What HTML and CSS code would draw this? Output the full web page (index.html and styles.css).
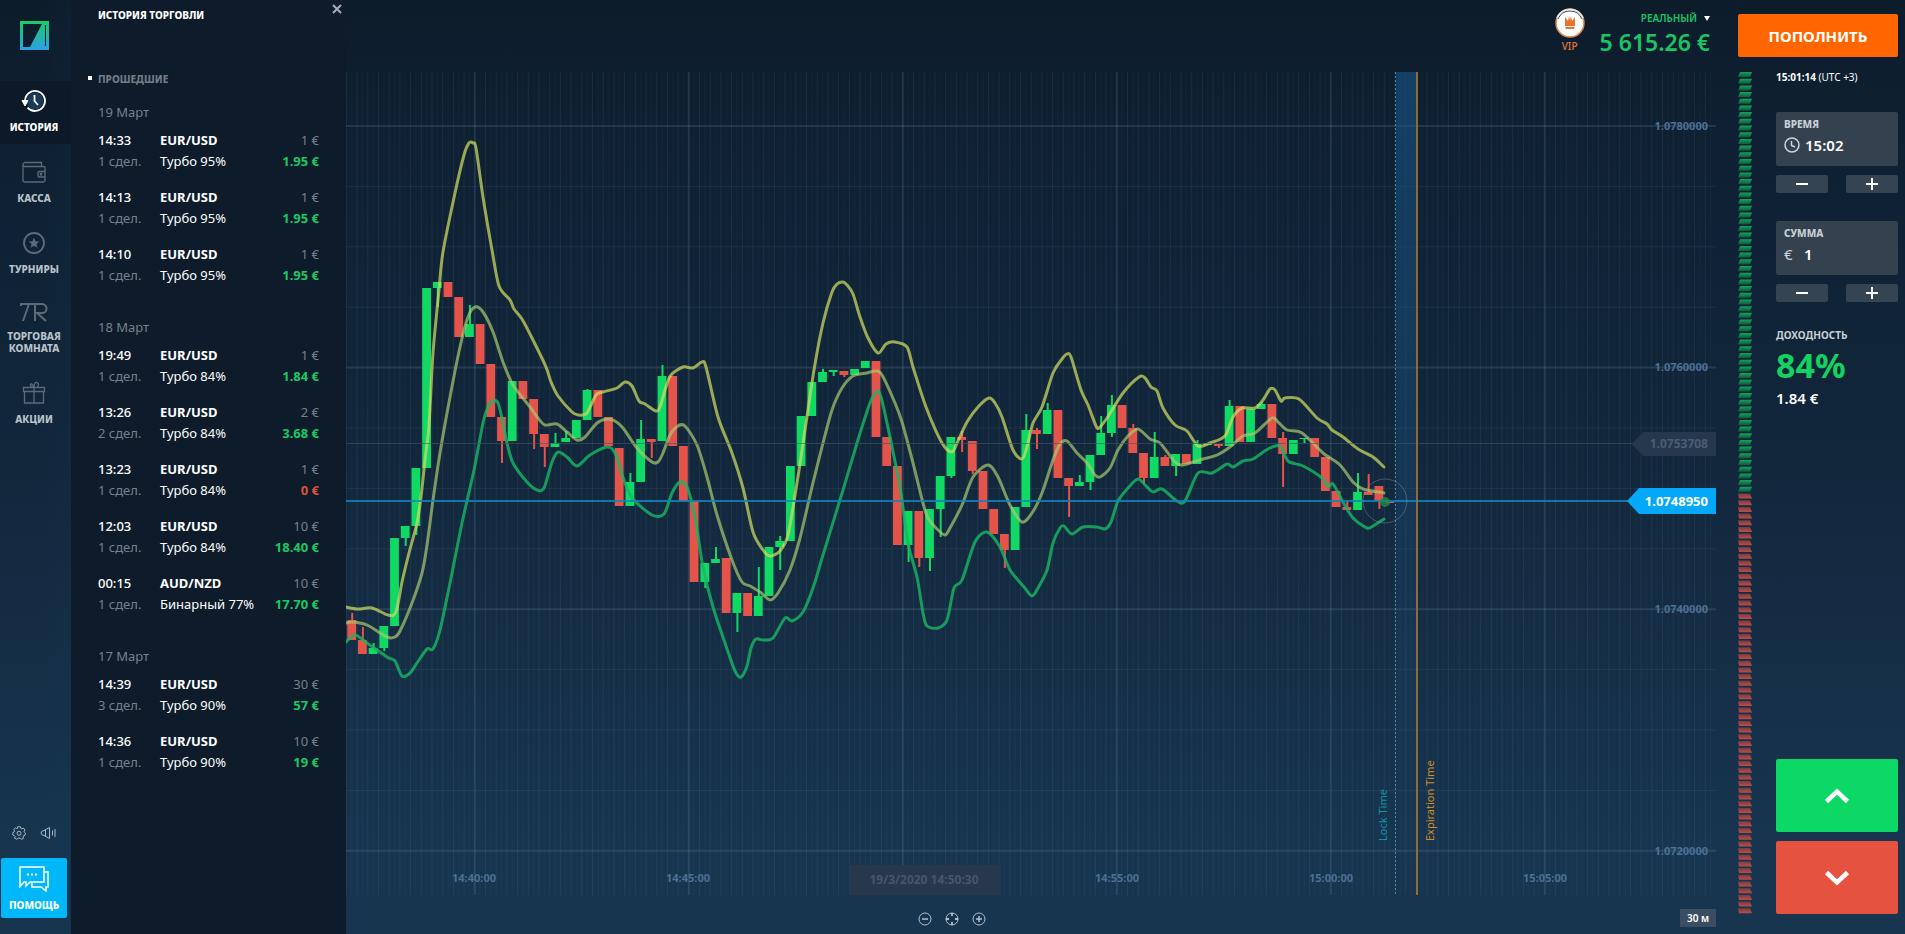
FILE: index.html
```html
<!DOCTYPE html>
<html lang="ru">
<head>
<meta charset="utf-8">
<meta name="viewport" content="width=device-width, initial-scale=1">
<title>История торговли</title>
<link rel="stylesheet" href="styles.css">
</head>
<body>
<div class="app">
  <nav class="sidebar">
    <a class="logo" href="#" aria-label="Главная">
      <svg width="30" height="30" viewBox="0 0 30 30">
        <defs><linearGradient id="lg" x1="0" y1="0" x2="0" y2="1"><stop offset="0" stop-color="#17cf62"/><stop offset="1" stop-color="#2f9fe6"/></linearGradient></defs>
        <path fill="url(#lg)" fill-rule="evenodd" d="M0 0H29V29H0ZM3 3V26H10L22 3ZM25 4V25H26V4Z"/>
      </svg>
    </a>
    <a class="nav-item active" href="#">
      <svg width="26" height="24" viewBox="0 0 26 24" fill="none" stroke="#fff" stroke-width="1.8"><circle cx="14" cy="12" r="8.500" fill="#183a58" stroke="none"/><path d="M4 12A10 10 0 1 1 6.500 18.600"/><path d="M13.500 6V12L17 16"/><path d="M1 11.500H7L4 17Z" fill="#fff" stroke-width="1"/></svg>
      <span>ИСТОРИЯ</span>
    </a>
    <a class="nav-item" href="#">
      <svg width="24" height="24" viewBox="0 0 24 24" fill="none" stroke="#5d6b79" stroke-width="1.3"><path d="M2 6Q1 6 1 4.500T2.500 2.500H19.500V6M1 4.500V20.500Q1 22 2.500 22H21.500Q23 22 23 20.500V7.500Q23 6.500 21.500 6.500H2M23 11.500H17Q16 11.500 16 12.500V16Q16 17 17 17H23"/><circle cx="19" cy="14.200" r=".8"/></svg>
      <span>КАССА</span>
    </a>
    <a class="nav-item" href="#">
      <svg width="24" height="24" viewBox="0 0 24 24"><circle cx="12" cy="12" r="10" fill="none" stroke="#5d6b79" stroke-width="1.800"/><path fill="#5d6b79" d="M12 6.500L13.500 10.300L17.300 10.500L14.400 13L15.400 16.800L12 14.700L8.600 16.800L9.600 13L6.700 10.500L10.500 10.300Z"/></svg>
      <span>ТУРНИРЫ</span>
    </a>
    <a class="nav-item room" href="#">
      <svg width="28" height="20" viewBox="0 2 28 20" fill="none" stroke="#5d6b79" stroke-width="2"><path d="M1 6V4H22A4 4 0 0 1 22 13H17L26 21M9 4L3 21M15 4V21"/></svg>
      <span>ТОРГОВАЯ<br>КОМНАТА</span>
    </a>
    <a class="nav-item" href="#">
      <svg width="24" height="24" viewBox="0 0 24 24" fill="none" stroke="#5d6b79" stroke-width="1.3"><path d="M1.500 6.500H22.500V10.500H1.500ZM2.500 10.500V22H21.500V10.500M12 6.500V22M12 6.500Q8 6 8.500 3.500Q10 1.500 12 6.500Q12 1 15 1.500Q18 3 15 6.500"/></svg>
      <span>АКЦИИ</span>
    </a>
    <div class="tools">
      <button type="button" aria-label="Настройки">
        <svg width="14" height="14" viewBox="0 0 14 14" fill="none" stroke="#a9b7c4"><path d="M5.700 .7H8.300L8.700 2.300L9.800 2.800L11.300 2L13 4L12.100 5.300L12.400 6.300L13.400 7L13 9.300L11.500 9.700L11 10.800L11.600 12.300L9.300 13.300L8.300 12.100H6.200L4.900 13.300L2.600 12.200L3.100 10.500L2.300 9.600L.8 9L.9 6.600L2.200 6L2.500 4.900L1.700 3.500L3.500 1.900L4.900 2.700L5.500 2.400Z"/><circle cx="7" cy="7.300" r="2"/></svg>
      </button>
      <button type="button" aria-label="Звук">
        <svg width="16" height="14" viewBox="0 0 16 14" fill="none" stroke="#a9b7c4"><path d="M4 9.500L9.500 12.500V1.500L4 4.500Q1 5 1 7T4 9.500ZM5.500 4V10M12.500 4.500V9.500M15 3V11"/></svg>
      </button>
    </div>
    <button class="help" type="button">
      <svg width="30" height="26" viewBox="0 0 30 26" fill="none" stroke="#fff" stroke-width="1.500"><path d="M1 1H25V16H11L7 20V16H5L1 20.500ZM25 6H29V21H27V25L22 21H13V16.500"/><path d="M8 8.500H10M12 8.500H14M16 8.500H18" stroke-width="2"/></svg>
      <span>ПОМОЩЬ</span>
    </button>
  </nav>

  <section class="history">
    <header class="history-head">
      <h1>ИСТОРИЯ ТОРГОВЛИ</h1>
      <button type="button" aria-label="Закрыть"><svg width="10" height="10" viewBox="0 0 10 10" stroke="#a6afb8" stroke-width="2"><path d="M1 1L9 9M9 1L1 9"/></svg></button>
    </header>
    <h2>ПРОШЕДШИЕ</h2>
    <h3>19 Март</h3>
    <ul class="trades">
      <li><b>14:33</b><strong>EUR/USD</strong><i>1 €</i><i>1 сдел.</i><span>Турбо 95%</span><em>1.95 €</em></li>
      <li><b>14:13</b><strong>EUR/USD</strong><i>1 €</i><i>1 сдел.</i><span>Турбо 95%</span><em>1.95 €</em></li>
      <li><b>14:10</b><strong>EUR/USD</strong><i>1 €</i><i>1 сдел.</i><span>Турбо 95%</span><em>1.95 €</em></li>
    </ul>
    <h3>18 Март</h3>
    <ul class="trades">
      <li><b>19:49</b><strong>EUR/USD</strong><i>1 €</i><i>1 сдел.</i><span>Турбо 84%</span><em>1.84 €</em></li>
      <li><b>13:26</b><strong>EUR/USD</strong><i>2 €</i><i>2 сдел.</i><span>Турбо 84%</span><em>3.68 €</em></li>
      <li><b>13:23</b><strong>EUR/USD</strong><i>1 €</i><i>1 сдел.</i><span>Турбо 84%</span><em class="loss">0 €</em></li>
      <li><b>12:03</b><strong>EUR/USD</strong><i>10 €</i><i>1 сдел.</i><span>Турбо 84%</span><em>18.40 €</em></li>
      <li><b>00:15</b><strong>AUD/NZD</strong><i>10 €</i><i>1 сдел.</i><span>Бинарный 77%</span><em>17.70 €</em></li>
    </ul>
    <h3>17 Март</h3>
    <ul class="trades">
      <li><b>14:39</b><strong>EUR/USD</strong><i>30 €</i><i>3 сдел.</i><span>Турбо 90%</span><em>57 €</em></li>
      <li><b>14:36</b><strong>EUR/USD</strong><i>10 €</i><i>1 сдел.</i><span>Турбо 90%</span><em>19 €</em></li>
    </ul>
  </section>

  <main class="market">
    <header class="account">
      <a class="vip" href="#">
        <svg width="30" height="30" viewBox="0 0 30 30"><circle cx="15" cy="15" r="14" fill="#fff" stroke="#d98a4a" stroke-width="1.500"/><path d="M3 11A13 13 0 0 1 27 11" fill="none" stroke="#33475a" stroke-width="1"/><path d="M2 10A14 14 0 0 1 28 10" fill="none" stroke="#e8edf2" stroke-width="1.500"/><path fill="#e8742c" d="M10 9L13 13L14 8L15 12L16 8L17 13L20 9V18H10ZM10.500 19H19.500V21H10.500Z"/></svg>
        <span>VIP</span>
      </a>
      <button class="balance" type="button"><span class="kind">РЕАЛЬНЫЙ <svg width="6" height="5" viewBox="0 0 6 5"><path d="M0 0H6L3 5Z" fill="#fff"/></svg></span><span class="sum">5 615.26 €</span></button>
    </header>
    <svg id="chart" class="chart" viewBox="346 72 1370 823" role="img" aria-label="График EUR/USD"></svg>
    <footer class="chart-bar">
      <span></span>
      <div class="zooms">
        <button type="button" aria-label="Уменьшить"><svg width="14" height="14" viewBox="0 0 14 14" fill="none" stroke="#b4c1cd"><circle cx="7" cy="7" r="6"/><path d="M4 7H10" stroke-width="1.500"/></svg></button>
        <button type="button" aria-label="Центрировать"><svg width="14" height="14" viewBox="0 0 14 14" fill="none" stroke="#b4c1cd"><circle cx="7" cy="7" r="6"/><path d="M7 1V4M7 10V13M1 7H4M10 7H13" stroke-width="1.800"/></svg></button>
        <button type="button" aria-label="Увеличить"><svg width="14" height="14" viewBox="0 0 14 14" fill="none" stroke="#b4c1cd"><circle cx="7" cy="7" r="6"/><path d="M4 7H10M7 4V10" stroke-width="1.500"/></svg></button>
      </div>
      <button class="period" type="button">30 м</button>
    </footer>
  </main>

  <aside class="deal">
    <button class="deposit" type="button">ПОПОЛНИТЬ</button>
    <div class="deal-body">
      <svg id="gauge" class="gauge" viewBox="0 0 14 842" preserveAspectRatio="none" aria-hidden="true"></svg>
      <form class="order">
        <p class="clock"><b>15:01:14</b> (UTC +3)</p>
        <div class="field">
          <label for="time">ВРЕМЯ</label>
          <div class="value"><svg width="16" height="16" viewBox="0 0 16 16" fill="none" stroke="#cdd4da" stroke-width="1.500"><circle cx="8" cy="8" r="7"/><path d="M7.500 4V8.500L11 10"/></svg><input id="time" type="text" value="15:02"></div>
        </div>
        <div class="steps"><button type="button" aria-label="Раньше"><svg width="12" height="12" viewBox="0 0 12 12"><path d="M0 6H12" stroke="#fff" stroke-width="2"/></svg></button><button type="button" aria-label="Позже"><svg width="12" height="12" viewBox="0 0 12 12"><path d="M0 6H12M6 0V12" stroke="#fff" stroke-width="2"/></svg></button></div>
        <div class="field">
          <label for="amount">СУММА</label>
          <div class="value"><span>€</span><input id="amount" type="text" value="1"></div>
        </div>
        <div class="steps"><button type="button" aria-label="Меньше"><svg width="12" height="12" viewBox="0 0 12 12"><path d="M0 6H12" stroke="#fff" stroke-width="2"/></svg></button><button type="button" aria-label="Больше"><svg width="12" height="12" viewBox="0 0 12 12"><path d="M0 6H12M6 0V12" stroke="#fff" stroke-width="2"/></svg></button></div>
        <div class="profit"><span class="caption">ДОХОДНОСТЬ</span><span class="percent">84%</span><span class="payout">1.84 €</span></div>
        <button class="call" type="button" aria-label="Вверх"><svg width="26" height="16" viewBox="0 0 26 16" fill="none" stroke="#fff" stroke-width="4.500"><path d="M2.500 13.500L13 3.500L23.500 13.500"/></svg></button>
        <button class="put" type="button" aria-label="Вниз"><svg width="26" height="16" viewBox="0 0 26 16" fill="none" stroke="#fff" stroke-width="4.500"><path d="M2.500 2.500L13 12.500L23.500 2.500"/></svg></button>
      </form>
    </div>
  </aside>
</div>
<script src="chart.js"></script>
</body>
</html>
```
FILE: styles.css
```css
* { box-sizing: border-box; margin: 0; padding: 0; }
body { font-family: "Noto Sans", sans-serif; font-size: 13px; color: #fff; background: #0d1c2b; }
button, input { font: inherit; color: inherit; background: none; border: 0; cursor: pointer; }
a { color: inherit; text-decoration: none; }
svg { display: block; }
.app { display: grid; grid-template-columns: 71px 275px minmax(0, 1fr) 189px; min-height: 100vh; background: linear-gradient(#0d1c2b 0, #0e2032 15%, #12273c 50%, #17354f 90%); }

.sidebar { display: flex; flex-direction: column; gap: 8px; padding-bottom: 16px; background: linear-gradient(90deg, transparent 60%, rgba(20, 55, 85, .12)); }
.logo { height: 73px; padding: 21px 20px; }
.nav-item { display: flex; flex-direction: column; align-items: center; gap: 8px; min-height: 63px; padding: 8px 3px 8px 0; font-size: 10px; font-weight: 800; line-height: 12px; color: #b9c2ca; text-align: center; }
.nav-item.active { color: #fff; background: #0b1928; }
.nav-item.room { min-height: 71px; padding-bottom: 3px; }
.tools { display: flex; justify-content: center; gap: 14px; margin-top: auto; padding: 0 3px 10px 0; }
.help { display: flex; flex-direction: column; align-items: center; gap: 6px; width: 66px; height: 60px; margin-left: 1px; padding-top: 8px; background: #00b7fa; border-radius: 2px; font-size: 10px; font-weight: 800; line-height: 14px; }

.history { background: #0d1b2a; padding: 0 27px 16px 27px; }
.history-head { display: flex; justify-content: space-between; height: 69px; margin-right: -23px; padding: 4px 0; }
h1 { font-size: 10px; font-weight: 800; line-height: 23px; }
.history-head button { width: 10px; height: 10px; }
h2 { margin-bottom: 13px; font-size: 10px; font-weight: 800; line-height: 20px; color: #717c87; }
h2::before { content: ""; float: left; width: 4px; height: 4px; margin: 7px 0 0 -10px; background: #fff; }
h3 { margin-bottom: 7px; font-size: 13px; font-weight: 400; line-height: 21px; color: #76818c; }
.trades { display: flex; flex-direction: column; gap: 15px; margin-bottom: 31px; list-style: none; }
.trades li { display: grid; grid-template-columns: 62px 1fr auto; font-size: 13px; line-height: 21px; white-space: nowrap; }
.trades b { font-weight: 500; }
.trades strong { font-weight: 700; }
.trades i { font-style: normal; color: #76818c; }
.trades span { font-weight: 400; }
.trades em { font-style: normal; font-weight: 700; color: #1cc764; }
.trades i:nth-child(3), .trades em { text-align: right; }
.trades .loss { color: #d4553f; }

.market { display: flex; flex-direction: column; }
.account { display: flex; justify-content: flex-end; gap: 15px; height: 72px; padding: 8px 6px 0 0; }
.vip { display: flex; flex-direction: column; align-items: center; font-size: 10px; font-weight: 500; line-height: 16px; color: #e07a3a; }
.balance { display: flex; flex-direction: column; align-items: flex-end; height: 50px; font-weight: 600; color: #1bc465; }
.kind { display: flex; align-items: center; gap: 7px; font-size: 10px; line-height: 20px; }
.sum { font-size: 23px; line-height: 28px; }
.chart { flex: 1; min-height: 0; width: 100%; font-size: 11px; }
.chart-bar { display: grid; grid-template-columns: 1fr auto 1fr; align-items: start; height: 39px; }
.zooms { display: flex; gap: 13px; padding: 17px 158px 0 0; }
.period { justify-self: end; width: 36px; height: 18px; margin-top: 14px; background: #3a4d63; font-size: 10px; font-weight: 600; }

.deal { display: flex; flex-direction: column; gap: 15px; padding: 14px 7px 20px 22px; }
.deposit { height: 43px; background: #ff6600; border-radius: 2px; font-size: 15px; font-weight: 700; }
.deal-body { flex: 1; display: flex; gap: 24px; }
.gauge { width: 14px; }
.order { flex: 1; display: flex; flex-direction: column; }
.clock { margin-bottom: 30px; font-size: 10px; line-height: 10px; }
.field { height: 54px; padding: 6px 8px; background: #34424f; border-radius: 2px; }
.field label { display: block; font-size: 10px; font-weight: 800; line-height: 13px; color: #c9d0d6; }
.value { display: flex; align-items: center; gap: 5px; height: 28px; font-size: 15px; }
.value span { width: 15px; color: #cdd4da; }
.value input { width: 60px; font-weight: 600; }
.steps { display: flex; justify-content: space-between; margin: 9px 0 28px; }
.steps button { display: flex; align-items: center; justify-content: center; width: 52px; height: 18px; background: #344453; border-radius: 2px; }
.profit { display: flex; flex-direction: column; gap: 4px; margin-bottom: auto; }
.caption { font-size: 10px; font-weight: 700; line-height: 10px; color: #c9d0d6; }
.percent { font-size: 34px; font-weight: 700; line-height: 42px; color: #14d161; }
.payout { font-size: 15px; font-weight: 600; line-height: 16px; }
.call, .put { display: flex; align-items: center; justify-content: center; height: 73px; border-radius: 2px; }
.call { margin-bottom: 9px; background: #0cd965; }
.put { background: #e55340; }

.candle-up { fill: #10d964; stroke: #10d964; }
.candle-down { fill: #e4544a; stroke: #e4544a; }
.band { fill: none; stroke-width: 3; stroke-linejoin: round; stroke-linecap: round; }
.axis-text { fill: #4d7096; font-weight: 700; }
```
FILE: chart.js
```javascript
const svg = document.getElementById('chart');
const parts = [];
const LEFT = 346, RIGHT = 1716, TOP = 72, BOTTOM = 895, STEP = 10.7, FIRST = 351.7;

// grid
const line = (x1, y1, x2, y2, attrs) => parts.push(`<line x1="${x1}" y1="${y1}" x2="${x2}" y2="${y2}" ${attrs}/>`);
for (let i = -12; i < 117; i++) {
  const x = 474.8 + i * STEP;
  if (x < LEFT || x > 1710) continue;
  if (i % 20 === 0) line(x, TOP, x, BOTTOM, 'stroke="#7896ae" stroke-opacity=".2" stroke-width="2"');
  else line(x, TOP, x, BOTTOM, 'stroke="#7896ae" stroke-opacity=".12"');
  line(x + STEP / 2, TOP, x + STEP / 2, BOTTOM, 'stroke="#7896ae" stroke-opacity=".03" stroke-width="2"');
}
for (let i = 0; i < 13; i++) {
  const y = 126 + i * 60.4;
  if (i % 4 === 0) line(LEFT, y, RIGHT, y, 'stroke="#7896ae" stroke-opacity=".2" stroke-width="2"');
  else line(LEFT, y, RIGHT, y, 'stroke="#7896ae" stroke-opacity=".12"');
}

// lock and expiration
parts.push('<defs><linearGradient id="lock" x1="0" y1="0" x2="0" y2="1"><stop offset="0" stop-color="#1a5a90" stop-opacity=".55"/><stop offset=".5" stop-color="#1a5a90" stop-opacity=".28"/><stop offset="1" stop-color="#1a5a90" stop-opacity="0"/></linearGradient></defs>');
parts.push('<rect x="1396" y="72" width="20" height="823" fill="url(#lock)"/>');
line(1395.5, TOP, 1395.5, BOTTOM, 'stroke="#4aa3bd" stroke-opacity=".8" stroke-dasharray="2 2"');

// candles: direction, body top, body bottom, wick top, wick bottom
const candles = [
['d',620,640,613],['d',640,654,627],['u',648,654,643],['u',626,648,0,651],['u',538,626],['u',526,538,0,546],['u',468,526,0,535],['u',288,468],['u',282,288,0,307],['d',282,297],
['d',297,337],['u',324,337,305],['d',324,364],['d',364,417],['d',417,441,0,463],['u',381,441],['d',381,399],['d',399,434,0,449],['d',434,447,0,467],['u',443,447,433],
['u',438,442,431],['u',420,438],['u',390,420,389],['d',390,417],['d',417,446],['d',448,506],['u',482,506,473],['u',439,482,420],['d',439,442,0,458],['u',376,441,365],
['d',376,446],['d',446,501],['d',501,582],['u',563,582,0,588],['u',559,563,547],['d',558,613],['u',593,613,0,632],['d',593,616],['u',596,616,567],['u',547,596],
['u',541,547,536,570],['u',466,541],['u',416,466],['u',382,416],['u',372,382,369],['u',370,372,0,376],['d',371,375,0,377],['u',369,375],['u',361,368],['d',361,437],
['d',437,466],['d',466,545],['u',511,545,0,562],['d',511,558,0,567],['u',509,558,0,571],['u',476,509,0,537],['u',437,476,0,478],['d',437,440,431,452],['d',441,471,0,474],['d',471,509],
['d',509,534],['d',534,550,0,568],['u',507,550],['u',430,507,414],['d',430,434,428,449],['u',410,434,403],['d',410,478],['d',478,486,0,517],['u',482,486,475],['u',455,482,0,490],
['u',433,455,416],['u',405,433,395,437],['d',405,428],['d',428,453,424],['d',453,478,0,484],['u',457,478,432],['d',457,466,455],['u',454,466,0,476],['d',454,464],['u',444,464,440],
['u',443,445],['d',444,446,0,448],['u',406,446,400],['d',406,442],['u',409,442],['u',404,409,402],['d',404,438],['d',438,454,432,487],['u',440,454],['u',438,439,0,443],
['d',438,457],['d',457,491],['d',491,507],['d',507,510,501],['u',492,510,473],['d',492,495,474],['d',486,501,0,509],['d',502,503]];
candles.forEach(([dir, top, bottom, high, low], i) => {
  const x = FIRST + i * STEP;
  const cls = dir === 'u' ? 'candle-up' : 'candle-down';
  parts.push(`<g class="${cls}"><rect x="${(x - 4.4).toFixed(1)}" y="${top}" width="8.800" height="${bottom - top}" stroke="none"/><line x1="${x + 0.5}" x2="${x + 0.5}" y1="${high || top}" y2="${low || bottom}" stroke-width="2"/></g>`);
});

// Bollinger bands
const upper = '346,607 358,609 372,608 388,615 396,612 402,582 409,553 417,523 421,497 425,460 429,425 433,353 439,290 443,252 455,193 464,155 469,143 473,143 476,148 483,197 492,250 499,286 510,300 514,309 522,319 533,340 546,367 551,382 558,396 572,412 578,415 587,413 596,395 603,392 617,388 625,382 632,386 639,401 645,404 656,411 660,407 666,387 671,375 683,367 693,368 702,362 706,367 718,417 732,453 743,488 753,532 763,550 770,556 780,551 788,535 797,483 804,437 814,370 823,323 832,292 837,284 843,282 847,285 853,294 860,317 868,338 878,353 886,344 895,342 907,347 913,367 926,407 942,443 952,452 957,443 967,422 978,407 989,398 995,403 1002,417 1013,450 1022,459 1027,447 1033,423 1042,407 1053,373 1062,359 1067,354 1071,357 1081,390 1088,405 1096,426 1099,428 1107,418 1123,393 1139,377 1145,378 1151,387 1157,391 1163,408 1175,425 1187,431 1198,446 1210,443 1225,436 1233,417 1242,408 1255,408 1263,400 1270,389 1275,390 1281,401 1285,398 1299,399 1317,418 1327,424 1332,430 1343,437 1358,449 1373,457 1384,467';
const middle = '346,623 353,622 367,625 387,637 395,637 400,631 412,603 422,573 427,545 433,500 440,453 450,397 460,347 468,317 475,307 483,312 493,332 503,362 513,385 530,407 538,418 545,425 557,424 567,432 577,440 585,437 597,423 607,419 615,421 623,428 637,448 652,462 658,462 663,453 670,435 678,426 685,426 697,445 707,477 717,515 732,560 742,582 750,586 760,592 770,600 778,593 790,570 800,538 812,487 822,447 832,410 842,388 853,376 867,373 876,371 882,375 895,403 902,422 913,463 923,503 928,518 937,529 945,535 950,528 962,505 973,477 988,465 998,477 1010,505 1022,522 1032,513 1042,493 1053,460 1060,444 1067,441 1077,453 1087,463 1095,475 1100,477 1110,468 1118,450 1128,436 1138,429 1150,439 1160,443 1175,462 1182,465 1193,462 1203,459 1217,455 1230,447 1243,436 1255,433 1272,418 1278,422 1287,430 1302,433 1323,453 1340,465 1353,482 1363,489 1384,493';
const lower = '346,642 355,635 367,643 387,657 395,661 402,676 410,673 417,663 427,649 433,649 440,630 450,583 462,523 474,470 483,423 488,407 493,401 498,403 503,423 507,443 513,463 527,482 537,490 544,488 552,462 558,452 567,457 577,466 590,455 607,447 615,453 625,483 633,499 652,515 664,514 672,493 680,482 687,487 695,517 703,567 713,607 725,643 735,671 741,677 747,666 751,648 756,639 763,640 773,638 785,618 792,621 803,612 813,588 823,555 843,490 857,443 870,403 877,391 881,397 887,423 900,487 908,543 917,577 923,613 927,626 938,628 947,620 954,588 962,580 975,542 987,532 1000,547 1010,570 1024,587 1032,596 1038,588 1047,570 1053,543 1060,528 1064,526 1072,534 1083,527 1097,527 1105,529 1111,522 1118,501 1128,488 1138,479 1147,487 1153,492 1162,489 1177,501 1185,501 1198,473 1212,473 1227,464 1233,467 1243,461 1253,459 1268,449 1280,446 1288,461 1303,466 1322,478 1328,487 1333,484 1343,502 1353,518 1367,528 1373,526 1384,519';
function smooth(text) {
  const p = text.split(' ').map(s => s.split(',').map(Number));
  let d = `M${p[0]}`;
  for (let i = 1; i < p.length; i++) {
    const a = p[i - 2] || p[i - 1], b = p[i - 1], c = p[i], e = p[i + 1] || c;
    d += `C${b[0] + (c[0] - a[0]) / 7},${b[1] + (c[1] - a[1]) / 7} ${c[0] - (e[0] - b[0]) / 7},${c[1] - (e[1] - b[1]) / 7} ${c}`;
  }
  return d;
}
parts.push(`<path class="band" stroke="#18b463" stroke-opacity=".82" d="${smooth(lower)}"/>`);
parts.push(`<path class="band" stroke="#a9c970" stroke-opacity=".7" d="${smooth(middle)}"/>`);
parts.push(`<path class="band" stroke="#cfdc5f" stroke-opacity=".72" d="${smooth(upper)}"/>`);

// crosshair and current price
line(LEFT, 443.5, 1640, 443.5, 'stroke="#40566b" stroke-opacity=".6"');
line(LEFT, 501, 1630, 501, 'stroke="#1184bd" stroke-opacity=".85" stroke-width="2"');
line(1417, TOP, 1417, BOTTOM, 'stroke="#9a7237" stroke-opacity=".9" stroke-width="2"');
parts.push('<circle cx="1385" cy="501" r="22" fill="none" stroke="#8fa0b0" stroke-opacity=".4"/><circle cx="1385" cy="502" r="5" fill="#20894f" fill-opacity=".8"/>');

// labels
const label = (x, y, text, attrs = '') => parts.push(`<text class="axis-text" x="${x}" y="${y}" ${attrs}>${text}</text>`);
[['1.0780000', 130], ['1.0760000', 371], ['1.0740000', 613], ['1.0720000', 855]].forEach(([t, y]) => label(1708, y, t, 'text-anchor="end"'));
[['14:40:00', 474], ['14:45:00', 688], ['14:55:00', 1117], ['15:00:00', 1331], ['15:05:00', 1545]].forEach(([t, x]) => label(x, 882, t, 'text-anchor="middle"'));
parts.push('<rect x="850" y="865" width="151" height="30" fill="#27384d"/><text x="924" y="884" text-anchor="middle" fill="#46566b" font-weight="700" font-size="12">19/3/2020 14:50:30</text>');
parts.push('<path d="M1632 444L1643 432H1716V456H1643Z" fill="#26384e"/><text x="1708" y="448" text-anchor="end" fill="#4c5d72" font-weight="700" font-size="12">1.0753708</text>');
parts.push('<path d="M1627 501L1639 488H1716V514H1639Z" fill="#04a8f8"/><text x="1708" y="506" text-anchor="end" fill="#fff" font-weight="700" font-size="13">1.0748950</text>');
parts.push('<text transform="translate(1387 841) rotate(-90)" fill="#0d93a5">Lock Time</text><text transform="translate(1434 841) rotate(-90)" fill="#d08d23">Expiration Time</text>');
svg.innerHTML = parts.join('');

// sentiment gauge
const bars = ['<defs><linearGradient id="gu" x1="0" y1="0" x2="0" y2="1"><stop offset="0" stop-color="#17a35c"/><stop offset="1" stop-color="#0d5a3c"/></linearGradient><linearGradient id="gd" x1="0" y1="0" x2="0" y2="1"><stop offset="0" stop-color="#773a40"/><stop offset="1" stop-color="#b84f4b"/></linearGradient></defs>'];
for (let i = 0; i < 126; i++) {
  const y = +(i * 6.69).toFixed(1);
  bars.push(i < 63
    ? `<path d="M2 ${y}H14L12 ${y + 5}H0Z" fill="url(#gu)"/>`
    : `<path d="M0 ${y}H12L14 ${y + 5}H1Z" fill="url(#gd)"/>`);
}
document.getElementById('gauge').innerHTML = bars.join('');
```
